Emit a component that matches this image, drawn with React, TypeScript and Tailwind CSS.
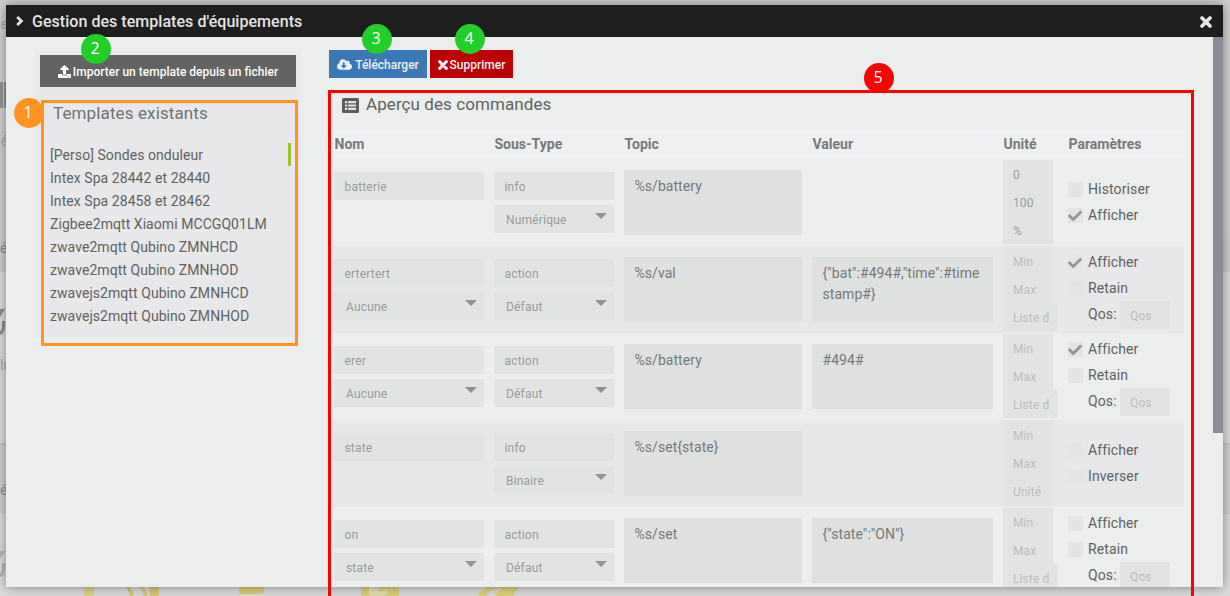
import React from "react";
import { FaUpload, FaCloudDownloadAlt, FaCheck } from "react-icons/fa";

type Param = { label: string; checked?: boolean };
type Command = {
  name: string;
  parent?: string;
  type: string;
  subType: string;
  topic: string;
  value?: string;
  units: string[];
  filled?: boolean;
  params: Param[];
  qos?: boolean;
};

const templates = [
  "[Perso] Sondes onduleur",
  "Intex Spa 28442 et 28440",
  "Intex Spa 28458 et 28462",
  "Zigbee2mqtt Xiaomi MCCGQ01LM",
  "zwave2mqtt Qubino ZMNHCD",
  "zwave2mqtt Qubino ZMNHOD",
  "zwavejs2mqtt Qubino ZMNHCD",
  "zwavejs2mqtt Qubino ZMNHOD",
];

const commands: Command[] = [
  {
    name: "batterie",
    type: "info",
    subType: "Numérique",
    topic: "%s/battery",
    units: ["0", "100", "%"],
    filled: true,
    params: [{ label: "Historiser" }, { label: "Afficher", checked: true }],
  },
  {
    name: "ertertert",
    parent: "Aucune",
    type: "action",
    subType: "Défaut",
    topic: "%s/val",
    value: '{"bat":#494#,"time":#timestamp#}',
    units: ["Min", "Max", "Liste d"],
    params: [{ label: "Afficher", checked: true }, { label: "Retain" }],
    qos: true,
  },
  {
    name: "erer",
    parent: "Aucune",
    type: "action",
    subType: "Défaut",
    topic: "%s/battery",
    value: "#494#",
    units: ["Min", "Max", "Liste d"],
    params: [{ label: "Afficher", checked: true }, { label: "Retain" }],
    qos: true,
  },
  {
    name: "state",
    type: "info",
    subType: "Binaire",
    topic: "%s/set{state}",
    units: ["Min", "Max", "Unité"],
    params: [{ label: "Afficher" }, { label: "Inverser" }],
  },
  {
    name: "on",
    parent: "state",
    type: "action",
    subType: "Défaut",
    topic: "%s/set",
    value: '{"state":"ON"}',
    units: ["Min", "Max", "Liste d"],
    params: [{ label: "Afficher" }, { label: "Retain" }],
    qos: true,
  },
];

const columns = "grid grid-cols-[150px_120px_178px_181px_50px_106px] gap-x-[10px] pl-[3px]";

function Cross({ className }: { className: string }) {
  return (
    <svg className={className} viewBox="0 0 12 12" fill="none" stroke="currentColor" strokeWidth="3.6" strokeLinecap="round">
      <path d="M2 2L10 10M10 2L2 10" />
    </svg>
  );
}

function ListIcon() {
  return (
    <svg className="h-[15px] w-[17px]" viewBox="0 0 17 15">
      <rect width="17" height="15" rx="1.5" fill="#5c5e5d" />
      <path
        d="M3 3H5.2V5.2H3ZM6.2 3H14V5.2H6.2ZM3 6.4H5.2V8.6H3ZM6.2 6.4H14V8.6H6.2ZM3 9.8H5.2V12H3ZM6.2 9.8H14V12H6.2Z"
        fill="#e0e2e1"
      />
    </svg>
  );
}

function Field({ text }: { text: string }) {
  return (
    <div className="h-7 bg-[#e2e4e3] pl-[10.5px] text-[12px] leading-[30px] tracking-[0.18px] text-[#999b9a]">
      {text}
    </div>
  );
}

function Select({ text }: { text: string }) {
  return (
    <div className="mt-[5px] flex h-7 justify-between bg-[#e2e4e3] pr-[7px] pl-3 text-[12px] leading-[30px] tracking-[0.18px] text-[#999b9a]">
      <span>{text}</span>
      <svg className="mt-2 h-[6px] w-3" viewBox="0 0 12 6">
        <path d="M0 0H12L6 6Z" fill="#929493" />
      </svg>
    </div>
  );
}

function Area({ text }: { text: string }) {
  return (
    <div className="mt-[11px] h-[65px] bg-[#dfe1e0] pr-[10px] pl-[10.5px] pt-[6px] text-[14px] leading-[21px] tracking-[0.05px] break-all text-[#777978]">
      {text}
    </div>
  );
}

function CommandRow({ command, striped }: { command: Command; striped: boolean }) {
  return (
    <div className={`${columns} h-[87px] shrink-0 ${striped ? "bg-[#e8e8ea]" : ""}`}>
      <div className="pt-[13px]">
        <Field text={command.name} />
        {command.parent && <Select text={command.parent} />}
      </div>
      <div className="pt-[13px]">
        <Field text={command.type} />
        <Select text={command.subType} />
      </div>
      <div>
        <Area text={command.topic} />
      </div>
      <div>{command.value && <Area text={command.value} />}</div>
      <div className="pt-px">
        {command.units.map((unit) => (
          <div
            key={unit}
            className={`h-7 bg-[#e2e4e3] pl-[10px] text-[12px] leading-[30px] tracking-[0.1px] whitespace-nowrap ${
              unit === "Liste d" ? "w-[55px]" : "w-[50px]"
            } ${command.filled ? "text-[#999b9a]" : "text-[#bcbebd]"}`}
          >
            {unit}
          </div>
        ))}
      </div>
      <div className={`flex flex-col pl-[5px] ${command.qos ? "pt-[3px]" : "pt-[17px]"}`}>
        {command.params.map((param) => (
          <div key={param.label} className="flex h-[26px] items-center text-[14px] tracking-[0.12px] text-[#606261]">
            <span
              className={`mt-px mr-[5px] flex h-[15px] w-[15px] items-center justify-center ${
                striped ? "bg-[#e4e5e7]" : "bg-[#e3e5e4]"
              }`}
            >
              {param.checked && <FaCheck className="mt-px mr-px h-[14px] w-[14px] shrink-0 text-[#929493]" />}
            </span>
            {param.label}
          </div>
        ))}
        {command.qos && (
          <div className="flex h-7 pl-5 text-[14px] leading-[26px] tracking-[0.12px] text-[#606261]">
            <span className="w-8 shrink-0">Qos:</span>
            <span className="h-7 w-[50px] shrink-0 bg-[#e2e4e3] pl-[10px] text-[12px] leading-[30px] text-[#bcbebd]">Qos</span>
          </div>
        )}
      </div>
    </div>
  );
}

function Marker({ n, className }: { n: number; className: string }) {
  return (
    <div
      className={`absolute flex h-[30px] w-[30px] items-center justify-center rounded-full pr-px pb-[2px] font-['Open_Sans',sans-serif] text-[16px] text-white ${className}`}
    >
      {n}
    </div>
  );
}

function Backdrop() {
  return (
    <div className="absolute inset-0 flex flex-col overflow-hidden bg-[#d9d9d9] text-[14px] text-[#8f8f8f]">
      <div className="h-[239px] shrink-0 bg-[#cfcfcf]" />
      <div className="h-[33px] shrink-0 bg-[#cbcbcb]" />
      <div className="h-[173px] shrink-0 border-b-2 border-[#c4c4c4] bg-[#d9d9d9]" />
      <div className="h-[69px] shrink-0 bg-[#cecece]" />
      <span className="absolute top-[14px] -left-[4px] text-[#a6a6a6]">te</span>
      <span className="absolute top-[82px] left-0 h-[26px] w-[3px] bg-[#929294]" />
      <span className="absolute top-[82px] left-[4px] h-[26px] w-[2px] bg-[#929294]" />
      <span className="absolute top-[131px] -left-[4px] text-[#a6a6a6]">té</span>
      <span className="absolute top-[238px] left-0">é</span>
      <span className="absolute top-[355px] left-0 text-[#aaa]">lu</span>
      <span className="absolute top-[480px] left-0">é</span>
      <svg className="absolute top-[309px] left-0 h-[26px] w-[6px]" viewBox="0 0 6 26">
        <path d="M0 0H5L0 8ZM2 12H5V18Q4 25 0 26V22Q2 21 2 18Z" fill="#8b8b8d" />
      </svg>
      <svg className="absolute top-[551px] left-0 h-[26px] w-[6px]" viewBox="0 0 6 26">
        <path d="M0 0H5L0 8ZM2 12H5V18Q4 25 0 26V22Q2 21 2 18Z" fill="#b5b5b5" />
      </svg>
      <svg className="absolute top-[586px] left-0 h-[10px] w-[560px]" viewBox="0 0 560 10">
        <path d="M84 0H94V10H84Z" fill="#dcd287" />
        <path d="M124 0Q129 4 130 10H134Q133 4 129 0ZM138 0Q143 4 144 10H148Q147 4 142 0ZM149 0H159V10H150Z" fill="#d8c577" />
        <path d="M239 0H264V6Q264 8 262 8H241Q239 8 239 6Z" fill="#dbcb73" />
        <path d="M361 0H399V10H361Z" fill="#dccf79" />
        <path d="M370 0Q366 8 370 10H386Q391 6 385 1Q384 6 379 5Q381 2 376 0Z" fill="#e0dcb7" stroke="#d8ca79" />
        <path d="M488 0H521Q515 4 513 10H494Q499 4 502 2Q490 2 486 10H477Q482 4 488 0Z" fill="#dccf79" />
      </svg>
    </div>
  );
}

export default function App() {
  return (
    <div className="relative h-[596px] w-[1230px] overflow-hidden font-[Roboto,sans-serif]">
      <Backdrop />
      <div className="relative mt-[5px] ml-[6px] flex h-[582px] w-[1217px] flex-col bg-[#eceeed] shadow-[0_0_10px_rgba(0,0,0,0.4)]">
        <header className="flex h-8 shrink-0 items-center bg-[#1e1e1e] pr-[11px] pl-[10px] text-[#e4e4e4]">
          <svg className="h-[10px] w-2" viewBox="0 0 8 10" fill="none" stroke="currentColor" strokeWidth="2.8">
            <path d="M1.2 1L5.4 5L1.2 9" />
          </svg>
          <h1 className="mt-[2px] ml-2 flex-1 text-[16px] font-medium tracking-[0.04px]">Gestion des templates d'équipements</h1>
          <Cross className="mt-[2px] h-[12px] w-[12px]" />
        </header>
        <div className="flex min-h-0 flex-1 overflow-hidden">
          <aside className="mt-[13px] ml-[29px] flex h-[287px] w-[266px] shrink-0 flex-col bg-[#e8e8ea] px-[5px] pt-[5px]">
            <button className="flex h-8 shrink-0 items-center justify-center gap-[2px] bg-[#636363] pt-px text-[12px] font-medium text-white">
              <FaUpload className="h-[13px] w-[13px]" />
              Importer un template depuis un fichier
            </button>
            <h2 className="mt-[13px] ml-[13px] text-[17px] leading-[26px] tracking-[0.12px] text-[#707271]">Templates existants</h2>
            <ul className="mt-[17px] ml-[10px] text-[14px] leading-[25px] tracking-[0.06px] text-[#606261]">
              {templates.map((name, i) => (
                <li key={name} className={`mr-[5px] h-[23px] ${i === 0 ? "border-r-[3px] border-[#96c927]" : ""}`}>
                  {name}
                </li>
              ))}
            </ul>
          </aside>
          <main className="ml-[24px] flex w-[860px] shrink-0 flex-col pt-[13px]">
            <div className="ml-[4px] flex h-7 shrink-0 gap-[3px] text-[12px] font-medium text-[#ecf0f4]">
              <button className="flex w-[98px] items-center justify-center gap-[3px] bg-[#3c78b5] pt-px">
                <FaCloudDownloadAlt className="h-[13px] w-[15px]" />
                Télécharger
              </button>
              <button className="flex w-[83px] items-center justify-center gap-[2px] bg-[#bd0000] pt-px">
                <Cross className="h-[10px] w-[10px]" />
                Supprimer
              </button>
            </div>
            <h2 className="mt-[14px] ml-[17px] flex h-[26px] shrink-0 items-center gap-[7px] text-[17px] tracking-[0.08px] text-[#606261]">
              <ListIcon />
              Aperçu des commandes
            </h2>
            <div className="mt-[11px] ml-[6px] w-[853px] shrink-0">
              <div className={`${columns} h-[30px] bg-[#eff0f2] text-[14px] leading-[30px] font-bold text-[#777978]`}>
                <span className="pl-[0.5px]">Nom</span>
                <span className="pl-[0.5px]">Sous-Type</span>
                <span className="pl-[0.5px]">Topic</span>
                <span className="pl-[0.5px]">Valeur</span>
                <span className="pl-[0.5px]">Unité</span>
                <span className="pl-[5.5px]">Paramètres</span>
              </div>
              {commands.map((command, i) => (
                <CommandRow key={command.name} command={command} striped={i % 2 === 1} />
              ))}
            </div>
          </main>
          <div className="ml-auto h-[396px] w-[10px] bg-[#8b8b95]" />
        </div>
      </div>
      <div className="absolute top-[100px] left-[41px] h-[246px] w-[257px] border-[3px] border-[#ff9421]" />
      <div className="absolute top-[90px] left-[328px] h-[520px] w-[866px] border-[3px] border-[#ff0000]" />
      <Marker n={1} className="top-[97.5px] left-[13.5px] bg-[#ff9421]" />
      <Marker n={2} className="top-[33.5px] left-[80.5px] bg-[#22ce28]" />
      <Marker n={3} className="top-[23.5px] left-[361.5px] bg-[#22ce28]" />
      <Marker n={4} className="top-[23.5px] left-[454.5px] bg-[#22ce28]" />
      <Marker n={5} className="top-[62.5px] left-[863.5px] bg-[#ff0000]" />
    </div>
  );
}
